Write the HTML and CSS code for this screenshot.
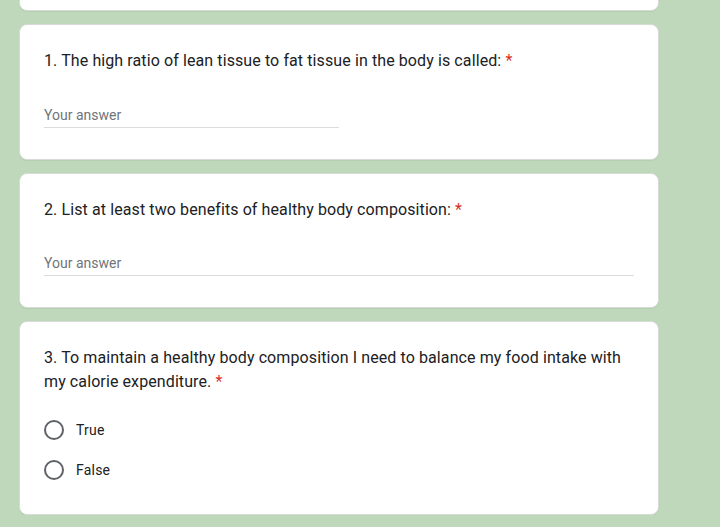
FILE: index.html
```html
<!DOCTYPE html>
<html>
<head>
<meta charset="utf-8">
<link rel="stylesheet" href="styles.css">
</head>
<body>
<div class="page">
  <div class="card card-prev"></div>

  <div class="card q">
    <div class="title">1. The high ratio of lean tissue to fat tissue in the body is called: <span class="req">*</span></div>
    <div class="answer half"><span>Your answer</span></div>
  </div>

  <div class="card q">
    <div class="title">2. List at least two benefits of healthy body composition: <span class="req">*</span></div>
    <div class="answer full"><span>Your answer</span></div>
  </div>

  <div class="card q">
    <div class="title">3. To maintain a healthy body composition I need to balance my food intake with my calorie expenditure. <span class="req">*</span></div>
    <div class="options">
      <div class="option"><span class="radio"></span><span class="label">True</span></div>
      <div class="option"><span class="radio"></span><span class="label">False</span></div>
    </div>
  </div>
</div>
</body>
</html>
```

FILE: styles.css
```css
html, body {
  margin: 0;
  padding: 0;
  background: #bfd8bb;
  font-family: Roboto, "Liberation Sans", Arial, sans-serif;
  color: #202124;
}
.page {
  width: 640px;
  margin-left: 19px;
  margin-top: -89px;
  display: flex;
  flex-direction: column;
  gap: 13px;
}
.card {
  background: #fff;
  border: 1px solid #d6dcd5;
  border-radius: 8px;
  box-shadow: 0 1px 1px rgba(0,0,0,0.05);
}
.card-prev {
  height: 98px;
}
.q {
  padding: 24px 24px 0 24px;
}
.title {
  font-size: 16px;
  line-height: 24px;
  letter-spacing: 0.1px;
}
.req {
  color: #d93025;
}
.answer {
  margin-top: 30px;
  height: 24px;
  border-bottom: 1px solid #dadce0;
  font-size: 14px;
  line-height: 24px;
  color: #70757a;
  margin-bottom: 31px;
}
.answer.half { width: 295px; }
.answer.full { width: 590px; margin-top: 29px; }
.options {
  margin-top: 24px;
  display: flex;
  flex-direction: column;
  gap: 16px;
  padding-bottom: 32px;
}
.option {
  display: flex;
  align-items: center;
  height: 24px;
}
.radio {
  box-sizing: border-box;
  width: 20px;
  height: 20px;
  border: 2px solid #5f6368;
  border-radius: 50%;
  margin-right: 12px;
}
.label {
  font-size: 14px;
  color: #202124;
  letter-spacing: 0.2px;
}
```
